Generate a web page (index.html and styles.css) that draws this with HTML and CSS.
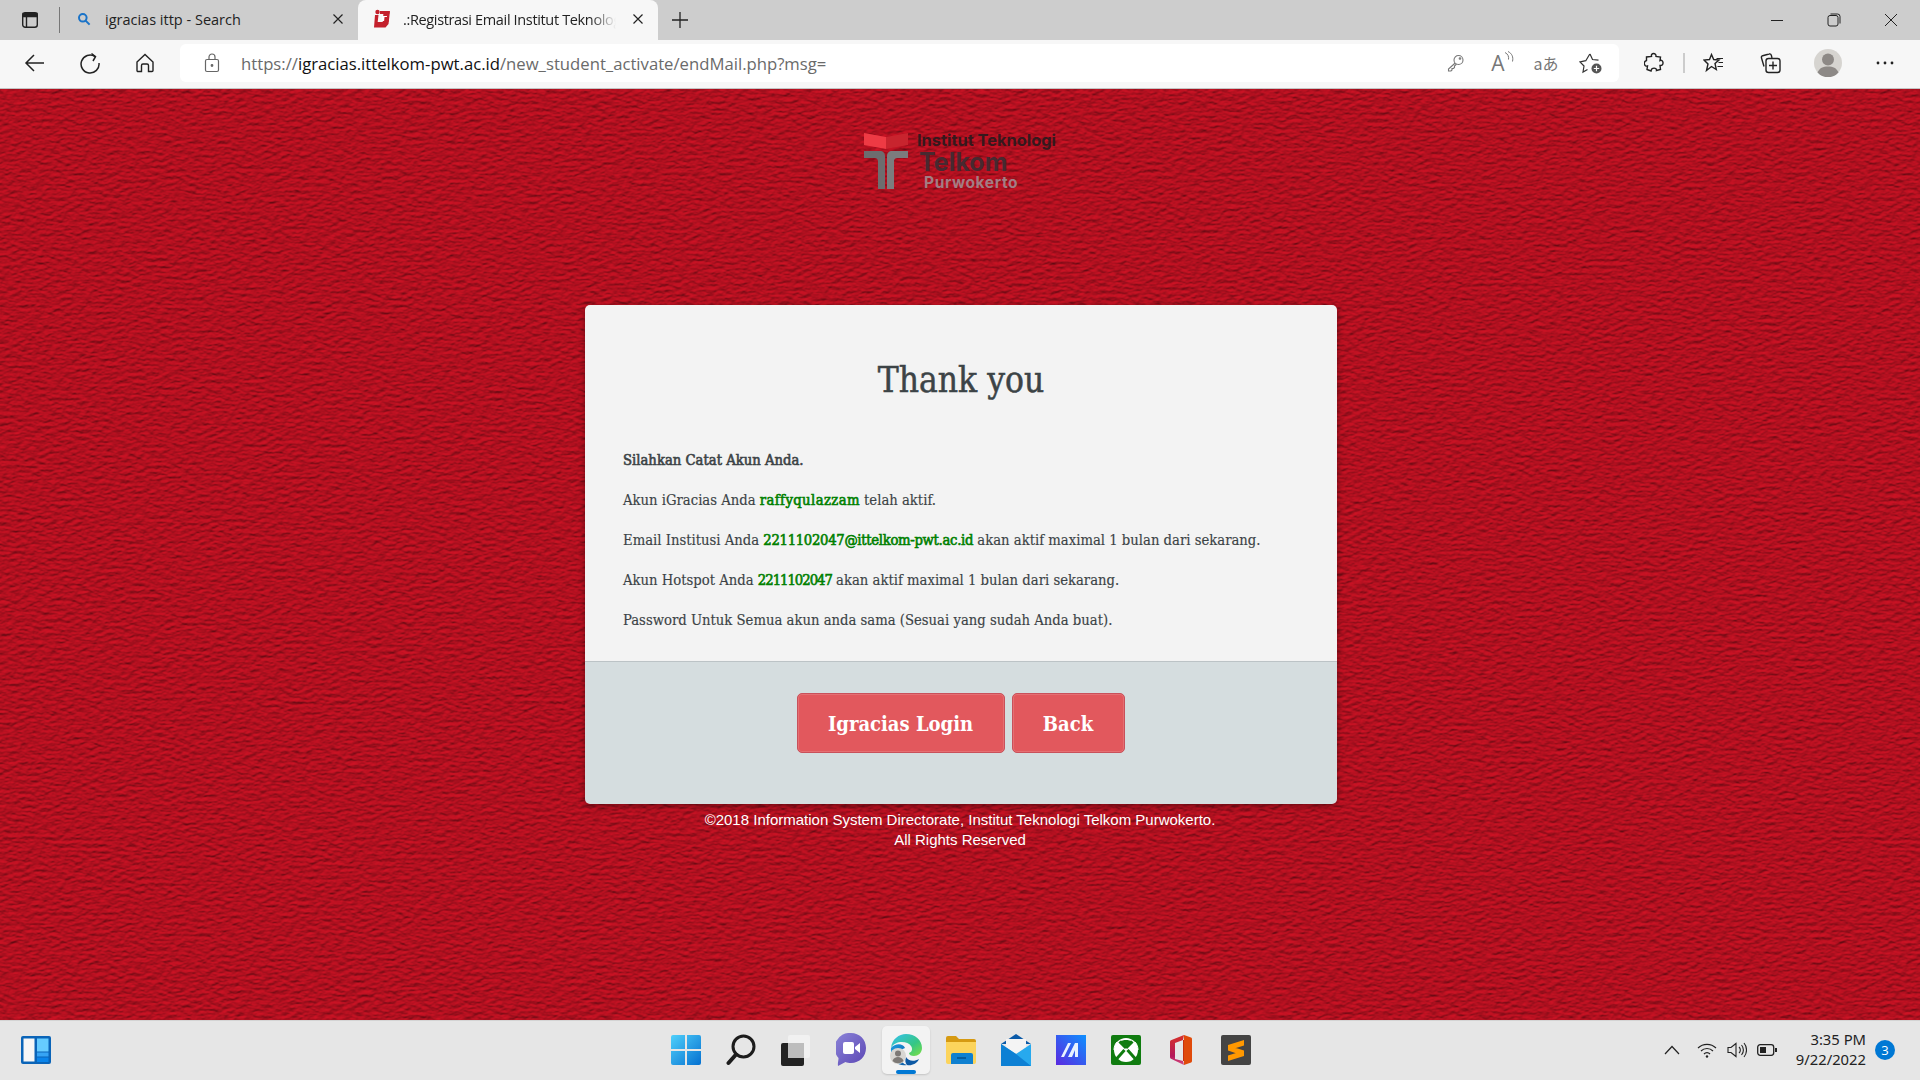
FILE: index.html
```html
<!DOCTYPE html>
<html>
<head>
    <title>.:Registrasi Email Institut Teknologi Telkom Purwokerto</title>
    <link rel="stylesheet" href="styles.css">
</head>
<body>
    <!-- browser chrome -->
    <div class="tabstrip">
        <div class="strip-btn">
            <svg width="18" height="18" viewBox="0 0 18 18" fill="none" stroke="#222" stroke-width="1.4">
                <rect x="1.7" y="1.7" width="14.6" height="14.6" rx="2.5"></rect>
                <path d="M2 2.5h14v3H2z" fill="#222"></path>
                <path d="M5.5 5.5v10.5"></path>
            </svg>
        </div>
        <div class="strip-divider"></div>
        <div class="tab">
            <svg width="14" height="14" viewBox="0 0 14 14" fill="none" stroke="#1a73c8" stroke-width="2">
                <circle cx="5.8" cy="5.8" r="3.8"></circle>
                <path d="M8.6 8.6l4 4"></path>
            </svg>
            <span class="tab-title">igracias ittp - Search</span>
            <svg class="tab-close" width="12" height="12" viewBox="0 0 12 12" stroke="#222" stroke-width="1.2"><path d="M1.5 1.5l9 9M10.5 1.5l-9 9"></path></svg>
        </div>
        <div class="tab tab-active">
            <svg width="20" height="20" viewBox="0 0 20 20">
                <path d="M4 6h3.500l-.8 7h5l.8-9.500L19 2l-1.500 13-3 3.500H3z" fill="#c4202c"></path>
                <circle cx="6.500" cy="3" r="2.200" fill="#c4202c"></circle>
                <path d="M9 2h9.500l-.3 3H9zM15 8h3l-.5 5h-3z" fill="#c4202c"></path>
                <path d="M11 7h5l-.1 1h-2.400l-.4 4h-2.500z" fill="#fff"></path>
            </svg>
            <span class="tab-title tab-fade">.:Registrasi Email Institut Teknologi Telkom Purwokerto</span>
            <svg class="tab-close" width="12" height="12" viewBox="0 0 12 12" stroke="#222" stroke-width="1.2"><path d="M1.5 1.500l9 9M10.500 1.500l-9 9"></path></svg>
        </div>
        <div class="tab-new">
            <svg width="18" height="18" viewBox="0 0 18 18" stroke="#222" stroke-width="1.3"><path d="M9 1v16M1 9h16"></path></svg>
        </div>
        <div class="window-controls">
            <div class="win-btn"><svg width="14" height="14" viewBox="0 0 14 14" stroke="#222" stroke-width="1"><path d="M1 7.500h12"></path></svg></div>
            <div class="win-btn"><svg width="14" height="14" viewBox="0 0 14 14" fill="none" stroke="#222" stroke-width="1"><rect x="1" y="2.500" width="10" height="10.500" rx="2"></rect><path d="M3.500 1h7a2.500 2.500 0 0 1 2.500 2.500v7"></path></svg></div>
            <div class="win-btn"><svg width="14" height="14" viewBox="0 0 14 14" stroke="#222" stroke-width="1"><path d="M1 1l12 12M13 1L1 13"></path></svg></div>
        </div>
    </div>

    <div class="toolbar">
        <div class="tool-btn">
            <svg width="22" height="22" viewBox="0 0 22 22" fill="none" stroke="#222" stroke-width="1.500"><path d="M20 11H2.500M10 3l-8 8 8 8"></path></svg>
        </div>
        <div class="tool-btn">
            <svg width="22" height="22" viewBox="0 0 22 22" fill="none" stroke="#222" stroke-width="1.500"><path d="M16 4.500A9 9 0 1 0 20 11"></path><path d="M12.500 1.500l4 3.200-2.500 4.300"></path></svg>
        </div>
        <div class="tool-btn">
            <svg width="20" height="20" viewBox="0 0 20 20" fill="none" stroke="#222" stroke-width="1.400"><path d="M2 9l8-7.500L18 9v8.500a1 1 0 0 1-1 1h-3.500v-6a1.500 1.500 0 0 0-1.500-1.500H8a1.500 1.500 0 0 0-1.500 1.500v6H3a1 1 0 0 1-1-1z"></path></svg>
        </div>
        <div class="address">
            <svg class="lock" width="16" height="20" viewBox="0 0 16 20" fill="none" stroke="#666" stroke-width="1.200"><rect x="1.500" y="6.500" width="13" height="12" rx="1.500"></rect><path d="M5 6.500V4a3 3 0 0 1 6 0v2.500"></path><circle cx="8" cy="12.500" r=".8" fill="#666"></circle></svg>
            <span class="url"><span class="url-dim">https://</span>igracias.ittelkom-pwt.ac.id<span class="url-dim">/new_student_activate/endMail.php?msg=</span></span>
            <div class="addr-icons">
                <div class="addr-icon">
                    <svg width="18" height="18" viewBox="0 0 18 18" fill="none" stroke="#777" stroke-width="1.100"><circle cx="11.500" cy="6" r="4.500"></circle><circle cx="13" cy="4.500" r=".8"></circle><path d="M8.200 9L1.500 15v2h2.500l1-1v-1.500h1.500l1-1V12l2-2"></path></svg>
                </div>
                <div class="addr-icon">
                    <span class="read-a">A</span>
                    <svg class="read-waves" width="11" height="13" viewBox="0 0 11 13" fill="none" stroke="#777" stroke-width="1"><path d="M1 1.500c3 1.500 4 4 3.500 7M4 .5c4 2 5.500 5.500 4.500 10"></path></svg>
                </div>
                <div class="addr-icon addr-translate">aあ</div>
                <div class="addr-icon">
                    <svg width="24" height="24" viewBox="0 0 24 24" fill="none" stroke="#333" stroke-width="1.200"><path d="M11 3l2.500 5.500 6 .7M8.500 18.500l-4.500 2.500 1-6-4-4 5.800-1.300L10.800 3"></path><circle cx="17.500" cy="17.500" r="5" fill="#555" stroke="none"></circle><path d="M17.500 14.800v5.400M14.800 17.500h5.400" stroke="#fff"></path></svg>
                </div>
            </div>
        </div>
        <div class="tool-right">
            <div class="tool-btn">
                <svg width="20" height="22" viewBox="0 0 20 22" fill="none" stroke="#222" stroke-width="1.400"><path d="M7.500 4.500C6.500 .5 12.500 .5 12 4.500L16.500 5l-.5 3.500c3.500-1.500 4.500 5.500 0 5l.5 4-4 1c.5-3-5-3.500-5.500.5l-4-1.500.5-3.500c-3.500 1-4.500-4.500-1-5.500L2.500 5z"></path></svg>
            </div>
            <div class="tool-sep"></div>
            <div class="tool-btn">
                <svg width="22" height="22" viewBox="0 0 22 22" fill="none" stroke="#222" stroke-width="1.400"><path d="M8.500 2.500l2.200 5 5.300.5-4 3.500 1.300 6-4.800-3-5 4 1.500-6.500L1 8l5.500-.5z"></path><path d="M13.500 6.500H20M15.500 10.500H20M14.500 14.500H20" stroke-width="1.200"></path></svg>
            </div>
            <div class="tool-btn">
                <svg width="22" height="22" viewBox="0 0 22 22" fill="none" stroke="#222" stroke-width="1.400"><path d="M4 14.500L1.500 6c-.3-1 .2-2 1.200-2.300L9 2c1-.3 2 .2 2.300 1.200L12 6"></path><rect x="6" y="6.500" width="14" height="14" rx="2.500"></rect><path d="M13 9.500v8M9 13.500h8"></path></svg>
            </div>
            <div class="tool-btn">
                <svg width="28" height="28" viewBox="0 0 28 28"><circle cx="14" cy="14" r="14" fill="#d6d4d0"></circle><circle cx="14" cy="10.500" r="6" fill="#8d8986"></circle><path d="M3.500 23.500c2-4.500 5.500-6 10.500-6s8.500 1.500 10.500 6a14 14 0 0 1-21 0z" fill="#8d8986"></path></svg>
            </div>
            <div class="tool-btn">
                <svg width="18" height="4" viewBox="0 0 18 4" fill="#222"><circle cx="2" cy="2" r="1.400"></circle><circle cx="9" cy="2" r="1.400"></circle><circle cx="16" cy="2" r="1.400"></circle></svg>
            </div>
        </div>
    </div>

    <!-- page -->
    <div class="page">
        <svg class="texture" width="100%" height="100%">
            <filter id="leather" x="0" y="0" width="100%" height="100%" color-interpolation-filters="sRGB">
                <feTurbulence type="fractalNoise" baseFrequency="0.14 0.28" numOctaves="3" seed="7"></feTurbulence>
                <feDiffuseLighting surfaceScale="1" diffuseConstant="1" lighting-color="#d01325">
                    <feDistantLight azimuth="80" elevation="58"></feDistantLight>
                </feDiffuseLighting>
            </filter>
            <rect width="100%" height="100%" filter="url(#leather)"></rect>
        </svg>

        <div class="logo">
            <svg class="logo-mark" width="45" height="56" viewBox="0 0 45 56">
                <path d="M0 0l22 4v12L0 12z" fill="#ee3a44"></path>
                <path d="M22 4L44 0v12L22 16z" fill="#c8242e"></path>
                <path d="M0 18h16c3 0 5 2 5 5v33h-7V29c0-3-1-4-4-4H0z" fill="#6d6d6f"></path>
                <path d="M44 18H28c-3 0-5 2-5 5v33h7V29c0-3 1-4 4-4H44z" fill="#7c7c7e"></path>
            </svg>
            <div class="logo-text">
                <span class="logo-line1">Institut Teknologi</span>
                <span class="logo-line2">Telkom</span>
                <span class="logo-line3">Purwokerto</span>
            </div>
        </div>

        <div class="card">
            <div class="card-body">
                <h1>Thank you</h1>
                <p><b>Silahkan Catat Akun Anda.</b></p>
                <p>Akun iGracias Anda <b class="hl hl-user">raffyqulazzam</b> telah aktif.</p>
                <p class="tight">Email Institusi Anda <b class="hl hl-mail">2211102047@ittelkom-pwt.ac.id</b> akan aktif maximal 1 bulan dari sekarang.</p>
                <p class="tight">Akun Hotspot Anda <b class="hl hl-num">2211102047</b> akan aktif maximal 1 bulan dari sekarang.</p>
                <p>Password Untuk Semua akun anda sama (Sesuai yang sudah Anda buat).</p>
            </div>
            <div class="card-footer">
                <a class="btn btn-login">Igracias Login</a>
                <a class="btn btn-back">Back</a>
            </div>
        </div>

        <div class="copyright">
            ©2018 Information System Directorate, Institut Teknologi Telkom Purwokerto.<br>
            All Rights Reserved
        </div>
    </div>

    <!-- taskbar -->
    <div class="taskbar">
        <div class="task-left">
            <svg width="30" height="28" viewBox="0 0 30 28">
                <rect width="30" height="28" rx="2" fill="#0a64b8"></rect>
                <rect x="2.500" y="2.500" width="11" height="23" fill="#f6f6f6"></rect>
                <rect x="16" y="2.500" width="11.500" height="13" fill="#66ccff"></rect>
                <rect x="16" y="16.500" width="11.500" height="4" fill="#36a4f4"></rect>
                <rect x="16" y="21.500" width="11.500" height="4.500" fill="#0a84ea"></rect>
            </svg>
        </div>
        <div class="task-center">
            <div class="task-item">
                <svg width="30" height="30" viewBox="0 0 30 30">
                    <defs><linearGradient id="win" x1="0" y1="0" x2="1" y2="1"><stop offset="0" stop-color="#4fd0fb"></stop><stop offset="1" stop-color="#0570d0"></stop></linearGradient></defs>
                    <path d="M0 2a2 2 0 0 1 2-2h12v14H0zM16 0h12a2 2 0 0 1 2 2v12H16zM0 16h14v14H2a2 2 0 0 1-2-2zM16 16h14v12a2 2 0 0 1-2 2H16z" fill="url(#win)"></path>
                </svg>
            </div>
            <div class="task-item">
                <svg width="30" height="32" viewBox="0 0 30 32" fill="none" stroke="#1c1c1c"><circle cx="17.500" cy="12.500" r="10.500" stroke-width="3"></circle><path d="M10 20.500L2.500 29" stroke-width="4" stroke-linecap="round"></path></svg>
            </div>
            <div class="task-item">
                <svg width="32" height="32" viewBox="0 0 32 32">
                    <rect x="1" y="9" width="23" height="23" rx="2" fill="#222"></rect>
                    <rect x="8" y="1" width="22" height="23" rx="2" fill="#f2f2f2" opacity=".85"></rect>
                    <rect x="8" y="9" width="16" height="15" fill="#bdbdbd"></rect>
                </svg>
            </div>
            <div class="task-item">
                <svg width="30" height="34" viewBox="0 0 30 34">
                    <defs><linearGradient id="chat" x1="0" y1="0" x2="1" y2="1"><stop offset="0" stop-color="#8b84d8"></stop><stop offset="1" stop-color="#5b46b4"></stop></linearGradient></defs>
                    <path d="M15 0c8.500 0 15 6.500 15 15s-6.500 15-15 15c-2 0-4-.4-5.500-1L2 33c-.5-3 .5-5 .5-8A15 15 0 0 1 15 0z" fill="url(#chat)"></path>
                    <rect x="7" y="9" width="11" height="12" rx="2" fill="#fff"></rect>
                    <path d="M19 14l5-4v10l-5-4z" fill="#fff"></path>
                </svg>
            </div>
            <div class="task-item task-active">
                <svg width="32" height="32" viewBox="0 0 32 32">
                    <defs>
                        <linearGradient id="edgeA" x1="0" y1="0" x2="1" y2="1"><stop offset="0" stop-color="#35c1f1"></stop><stop offset=".6" stop-color="#35c684"></stop><stop offset="1" stop-color="#7fe043"></stop></linearGradient>
                        <linearGradient id="edgeB" x1="0" y1="0" x2="1" y2="1"><stop offset="0" stop-color="#1b9de2"></stop><stop offset="1" stop-color="#0c59a4"></stop></linearGradient>
                    </defs>
                    <path d="M1 14C2 5 9 0 16 0c9 0 16 6 16 14 0 5-4 8-8 8-3 0-5-1-5-3 3-1 4-4 2-7C18 7 5 6 1 14z" fill="url(#edgeA)"></path>
                    <path d="M1 14c4-5 12-5 14 0-4 1-6 5-5 10 1 3 3 6 7 7C8 33 0 26 1 14z" fill="url(#edgeB)"></path>
                    <path d="M17 31c4 1 10-1 12-6-5 3-11 2-13-2-1 3-1 6 1 8z" fill="#0c59a4"></path>
                    <circle cx="8" cy="22" r="8" fill="#d8d6d2"></circle>
                    <circle cx="8" cy="19.500" r="3" fill="#7d7976"></circle>
                    <path d="M2.500 27c1-3 3-4 5.500-4s4.500 1 5.500 4a8 8 0 0 1-11 0z" fill="#7d7976"></path>
                </svg>
                <span class="task-indicator"></span>
            </div>
            <div class="task-item">
                <svg width="30" height="28" viewBox="0 0 30 28">
                    <path d="M0 2a2 2 0 0 1 2-2h8l3 3h15a2 2 0 0 1 2 2v4H0z" fill="#d69a12"></path>
                    <path d="M0 6h30v20a2 2 0 0 1-2 2H2a2 2 0 0 1-2-2z" fill="#fcd45c"></path>
                    <path d="M5 19a2 2 0 0 1 2-2h18a2 2 0 0 1 2 2v9H5z" fill="#0f80d0"></path>
                    <path d="M11 22h9" stroke="#06508c" stroke-width="1.500"></path>
                </svg>
            </div>
            <div class="task-item">
                <svg width="30" height="32" viewBox="0 0 30 32">
                    <path d="M15 0l15 10H0z" fill="#0a5aa8"></path>
                    <path d="M5 5h20v14H5z" fill="#f4f4f4"></path>
                    <path d="M0 10l15 10 15-10v22H0z" fill="#27a9ee"></path>
                    <path d="M0 32V10l15 10 15 12z" fill="#0d80d4"></path>
                </svg>
            </div>
            <div class="task-item">
                <svg width="30" height="30" viewBox="0 0 30 30">
                    <defs><linearGradient id="msapp" x1="0" y1="1" x2="1" y2="0"><stop offset="0" stop-color="#5a28e0"></stop><stop offset="1" stop-color="#0e90ff"></stop></linearGradient></defs>
                    <rect width="30" height="30" fill="url(#msapp)"></rect>
                    <path d="M5 22l7-14h3L8 22zM12 22l7-14h3v14h-3v-7l-3 7z" fill="#e8f2ff"></path>
                </svg>
            </div>
            <div class="task-item">
                <svg width="30" height="30" viewBox="0 0 30 30">
                    <rect width="30" height="30" rx="2" fill="#107c10"></rect>
                    <circle cx="15" cy="15" r="12" fill="#fff"></circle>
                    <path d="M15 11.500L9 6.500c3-2 9-2 12 0z" fill="#107c10"></path>
                    <path d="M15 13L8.500 6.500M15 13l6.500-6.500M13.500 15L5.500 24M16.500 15l8 9" stroke="#107c10" stroke-width="3" fill="none"></path>
                    <path d="M3 15c0-3 1-6 3-8M27 15c0-3-1-6-3-8" stroke="#fff" stroke-width="1" fill="none"></path>
                </svg>
            </div>
            <div class="task-item">
                <svg width="24" height="30" viewBox="0 0 24 30">
                    <defs>
                        <linearGradient id="officeL" x1="0" y1="0" x2="0" y2="1"><stop offset="0" stop-color="#d8322a"></stop><stop offset=".7" stop-color="#b3185a"></stop><stop offset="1" stop-color="#d84a80"></stop></linearGradient>
                    </defs>
                    <path d="M15 0l7 2.500c.8.300 1 1 1 2v21c0 1-.2 1.700-1 2L15 30V0z" fill="#e04a0a"></path>
                    <path d="M15 0L2.500 5C1.500 5.400 1 6 1 7v15c0 1 .5 1.600 1.500 2L15 30l-1-4-8-2V8l8-3z" fill="url(#officeL)"></path>
                    <path d="M14 5h1v21h-1z" fill="#c8300c"></path>
                </svg>
            </div>
            <div class="task-item">
                <svg width="30" height="30" viewBox="0 0 30 30">
                    <rect width="30" height="30" rx="2" fill="#444"></rect>
                    <path d="M7 10L23 5v5.500L7 15.500zM7 10.500l16 5v5.500L7 15.500zM7 20.500l16-5v5.500L7 26z" fill="#ff9800"></path>
                </svg>
            </div>
        </div>
        <div class="task-right">
            <svg class="tray-icon tray-chevron" width="16" height="10" viewBox="0 0 16 10" fill="none" stroke="#222" stroke-width="1.200"><path d="M1 9l7-7.500L15 9"></path></svg>
            <svg class="tray-icon" width="20" height="15" viewBox="0 0 20 15" fill="none" stroke="#222" stroke-width="1.200"><path d="M1 5a13 13 0 0 1 18 0M4 8a8.500 8.500 0 0 1 12 0M7 11a4 4 0 0 1 6 0"></path><circle cx="10" cy="13.500" r="1.200" fill="#222" stroke="none"></circle></svg>
            <svg class="tray-icon" width="20" height="16" viewBox="0 0 20 16" fill="none" stroke="#222" stroke-width="1.100"><path d="M1 5.500h3L9 1.500v13l-5-4H1z"></path><path d="M12 5a4 4 0 0 1 0 6M14.500 3a7.500 7.500 0 0 1 0 10M17 1a11 11 0 0 1 0 14"></path></svg>
            <svg class="tray-icon" width="20" height="12" viewBox="0 0 20 12"><rect x=".7" y=".7" width="16" height="10.600" rx="2.500" fill="none" stroke="#222" stroke-width="1.300"></rect><rect x="3" y="3" width="6" height="6" fill="#222"></rect><rect x="18" y="4" width="2" height="4" fill="#222"></rect></svg>
            <div class="clock">3:35 PM<br>9/22/2022</div>
            <span class="notif">3</span>
        </div>
    </div>
</body>
</html>
```

FILE: styles.css
```css
:root {
    --strip: #cdcdcd;
    --toolbar: #f7f7f7;
    --taskbar: #e6e6e6;
    --ink: #222222;
    --card: #f3f3f3;
    --card-foot: #d5dddf;
    --btn: #e2585d;
    --slab: 'DejaVu Serif Condensed', 'DejaVu Serif', serif;
    --ui: 'Open Sans', 'Noto Sans', sans-serif;
}

* {
    margin: 0;
    padding: 0;
    box-sizing: border-box;
}

html, body {
    height: 1080px;
    overflow: hidden;
}

body {
    display: flex;
    flex-direction: column;
    font-family: var(--ui);
    color: var(--ink);
}

/* tab strip */
.tabstrip {
    height: 40px;
    background: var(--strip);
    display: flex;
    align-items: stretch;
}

.strip-btn {
    width: 59px;
    display: flex;
    align-items: center;
    justify-content: center;
}

.strip-divider {
    width: 1px;
    height: 26px;
    margin-top: 7px;
    background: #777;
}

.tab {
    width: 298px;
    padding: 0 14px 2px 17px;
    display: flex;
    align-items: center;
    gap: 14px;
    font-size: 14.5px;
}

.tab-title {
    flex: 1;
    white-space: nowrap;
    overflow: hidden;
}

.tab-active {
    width: 300px;
    background: var(--toolbar);
    border-radius: 8px 8px 0 0;
    padding-left: 13px;
    gap: 12px;
    letter-spacing: -.35px;
}

.tab-fade {
    -webkit-mask-image: linear-gradient(to right, #000 88%, transparent 100%);
    mask-image: linear-gradient(to right, #000 88%, transparent 100%);
}

.tab-close {
    flex: none;
    margin-left: 4px;
}

.tab-new {
    width: 44px;
    display: flex;
    align-items: center;
    justify-content: center;
}

.window-controls {
    margin-left: auto;
    padding-right: 1px;
    display: flex;
}

.win-btn {
    width: 57px;
    display: flex;
    align-items: center;
    justify-content: center;
}

/* toolbar */
.toolbar {
    height: 49px;
    background: var(--toolbar);
    border-bottom: 1px solid #c4c4c4;
    padding: 0 7px 3px 7px;
    display: flex;
    align-items: center;
}

.tool-btn {
    width: 55px;
    height: 38px;
    display: flex;
    align-items: center;
    justify-content: center;
}

.address {
    width: 1439px;
    height: 38px;
    margin-left: 8px;
    background: #fff;
    border-radius: 6px;
    padding: 0 10px 0 24px;
    display: flex;
    align-items: center;
    gap: 21px;
}

.url {
    padding-top: 2px;
    font-size: 16.7px;
    color: #111;
    white-space: nowrap;
}

.url-dim {
    color: #6a6a6a;
}

.addr-icons {
    margin-left: auto;
    display: flex;
    gap: 9px;
}

.addr-icon {
    width: 36px;
    height: 26px;
    position: relative;
    display: flex;
    align-items: center;
    justify-content: center;
}

.read-a {
    font-size: 21px;
    color: #777;
    margin-right: 6px;
}

.read-waves {
    position: absolute;
    top: 1px;
    right: 4px;
}

.addr-translate {
    font-family: 'Noto Sans CJK JP', 'Noto Sans', sans-serif;
    font-size: 16px;
    color: #777;
}

.tool-right {
    margin-left: 7px;
    display: flex;
    align-items: center;
    gap: 1px;
}

.tool-right .tool-btn {
    width: 56px;
}

.tool-sep {
    width: 2px;
    height: 20px;
    background: #ccc;
}

/* page */
.page {
    flex: 1;
    position: relative;
    display: flex;
    flex-direction: column;
    align-items: center;
    background: #b5101f;
    overflow: hidden;
}

.texture {
    position: absolute;
    top: 0;
    left: 0;
}

.logo,
.card,
.copyright {
    position: relative;
}

.logo {
    margin-top: 41px;
    height: 175px;
    display: flex;
    align-items: flex-start;
    gap: 8px;
}

.logo-mark {
    margin-top: 3px;
}

.logo-text {
    display: flex;
    flex-direction: column;
    font-family: 'Inter', sans-serif;
    font-weight: 700;
}

.logo-line1 {
    font-size: 16.4px;
    line-height: 20px;
    color: #35191d;
}

.logo-line2 {
    margin-left: 2px;
    font-size: 25px;
    line-height: 24px;
    color: #472930;
}

.logo-line3 {
    margin-left: 7px;
    margin-top: -1px;
    font-size: 15.5px;
    line-height: 20px;
    letter-spacing: .6px;
    color: #a37d84;
}

.card {
    width: 752px;
    height: 499px;
    margin-left: 2px;
    border-radius: 5px;
    overflow: hidden;
    display: flex;
    flex-direction: column;
    box-shadow: 0 2px 6px rgba(0, 0, 0, .4);
}

.card-body {
    height: 357px;
    background: var(--card);
    border-bottom: 1px solid #bcc3c6;
    padding: 52px 38px 0;
    font-family: var(--slab);
    color: #3c4346;
}

.card-body h1 {
    font-size: 35px;
    line-height: 46px;
    font-weight: 400;
    -webkit-text-stroke: .5px #3c4346;
    text-align: center;
    margin-bottom: 47px;
}

.card-body p {
    font-size: 14.7px;
    line-height: 20px;
    margin-bottom: 20px;
    -webkit-text-stroke: .15px #3c4346;
}

.card-body b {
    font-weight: 400;
    -webkit-text-stroke: .6px #3c4346;
}

.card-body .hl {
    color: #008000;
    -webkit-text-stroke: .6px #008000;
}

.hl-user {
    letter-spacing: .4px;
}

.hl-mail {
    letter-spacing: -.3px;
}

.hl-num {
    letter-spacing: -1px;
}

.card-footer {
    flex: 1;
    background: var(--card-foot);
    padding: 31px 1px 0 0;
    display: flex;
    justify-content: center;
    gap: 7px;
}

.btn {
    height: 60px;
    padding-top: 2px;
    display: flex;
    align-items: center;
    justify-content: center;
    background: var(--btn);
    border: 1px solid #c9505a;
    border-radius: 5px;
    box-shadow: inset 0 0 0 1px #e56f73;
    color: #fff;
    font-family: var(--slab);
    font-size: 20px;
    font-weight: 700;
}

.btn-login {
    width: 208px;
}

.btn-back {
    width: 113px;
}

.copyright {
    margin-top: 6px;
    font-family: 'Liberation Sans', sans-serif;
    font-size: 15px;
    line-height: 20px;
    color: #fff;
    text-align: center;
}

/* taskbar */
.taskbar {
    height: 60px;
    background: var(--taskbar);
    border-top: 1px solid #d4d4d4;
    padding-bottom: 1px;
    display: grid;
    grid-template-columns: 1fr auto 1fr;
    align-items: center;
}

.task-left {
    padding-left: 21px;
    display: flex;
    align-items: center;
}

.task-center {
    margin-left: 1px;
    display: flex;
    gap: 7px;
}

.task-item {
    width: 48px;
    height: 48px;
    position: relative;
    display: flex;
    align-items: center;
    justify-content: center;
}

.task-active {
    background: #f3f3f3;
    border-radius: 5px;
    box-shadow: 0 1px 2px rgba(0, 0, 0, .15);
}

.task-indicator {
    position: absolute;
    left: 14px;
    bottom: 0;
    width: 20px;
    height: 4px;
    border-radius: 2px;
    background: #0078d4;
}

.task-right {
    display: flex;
    align-items: center;
    justify-content: flex-end;
    padding-right: 25px;
}

.tray-icon {
    margin-right: 10px;
}

.tray-chevron {
    margin-right: 17px;
}

.clock {
    margin-left: 9px;
    padding-bottom: 2px;
    font-family: 'Noto Sans', sans-serif;
    font-size: 14.8px;
    line-height: 20px;
    text-align: right;
    color: #222;
}

.notif {
    width: 20px;
    height: 20px;
    margin-left: 9px;
    border-radius: 50%;
    background: #0078d4;
    color: #fff;
    font-size: 13px;
    display: flex;
    align-items: center;
    justify-content: center;
}
```
